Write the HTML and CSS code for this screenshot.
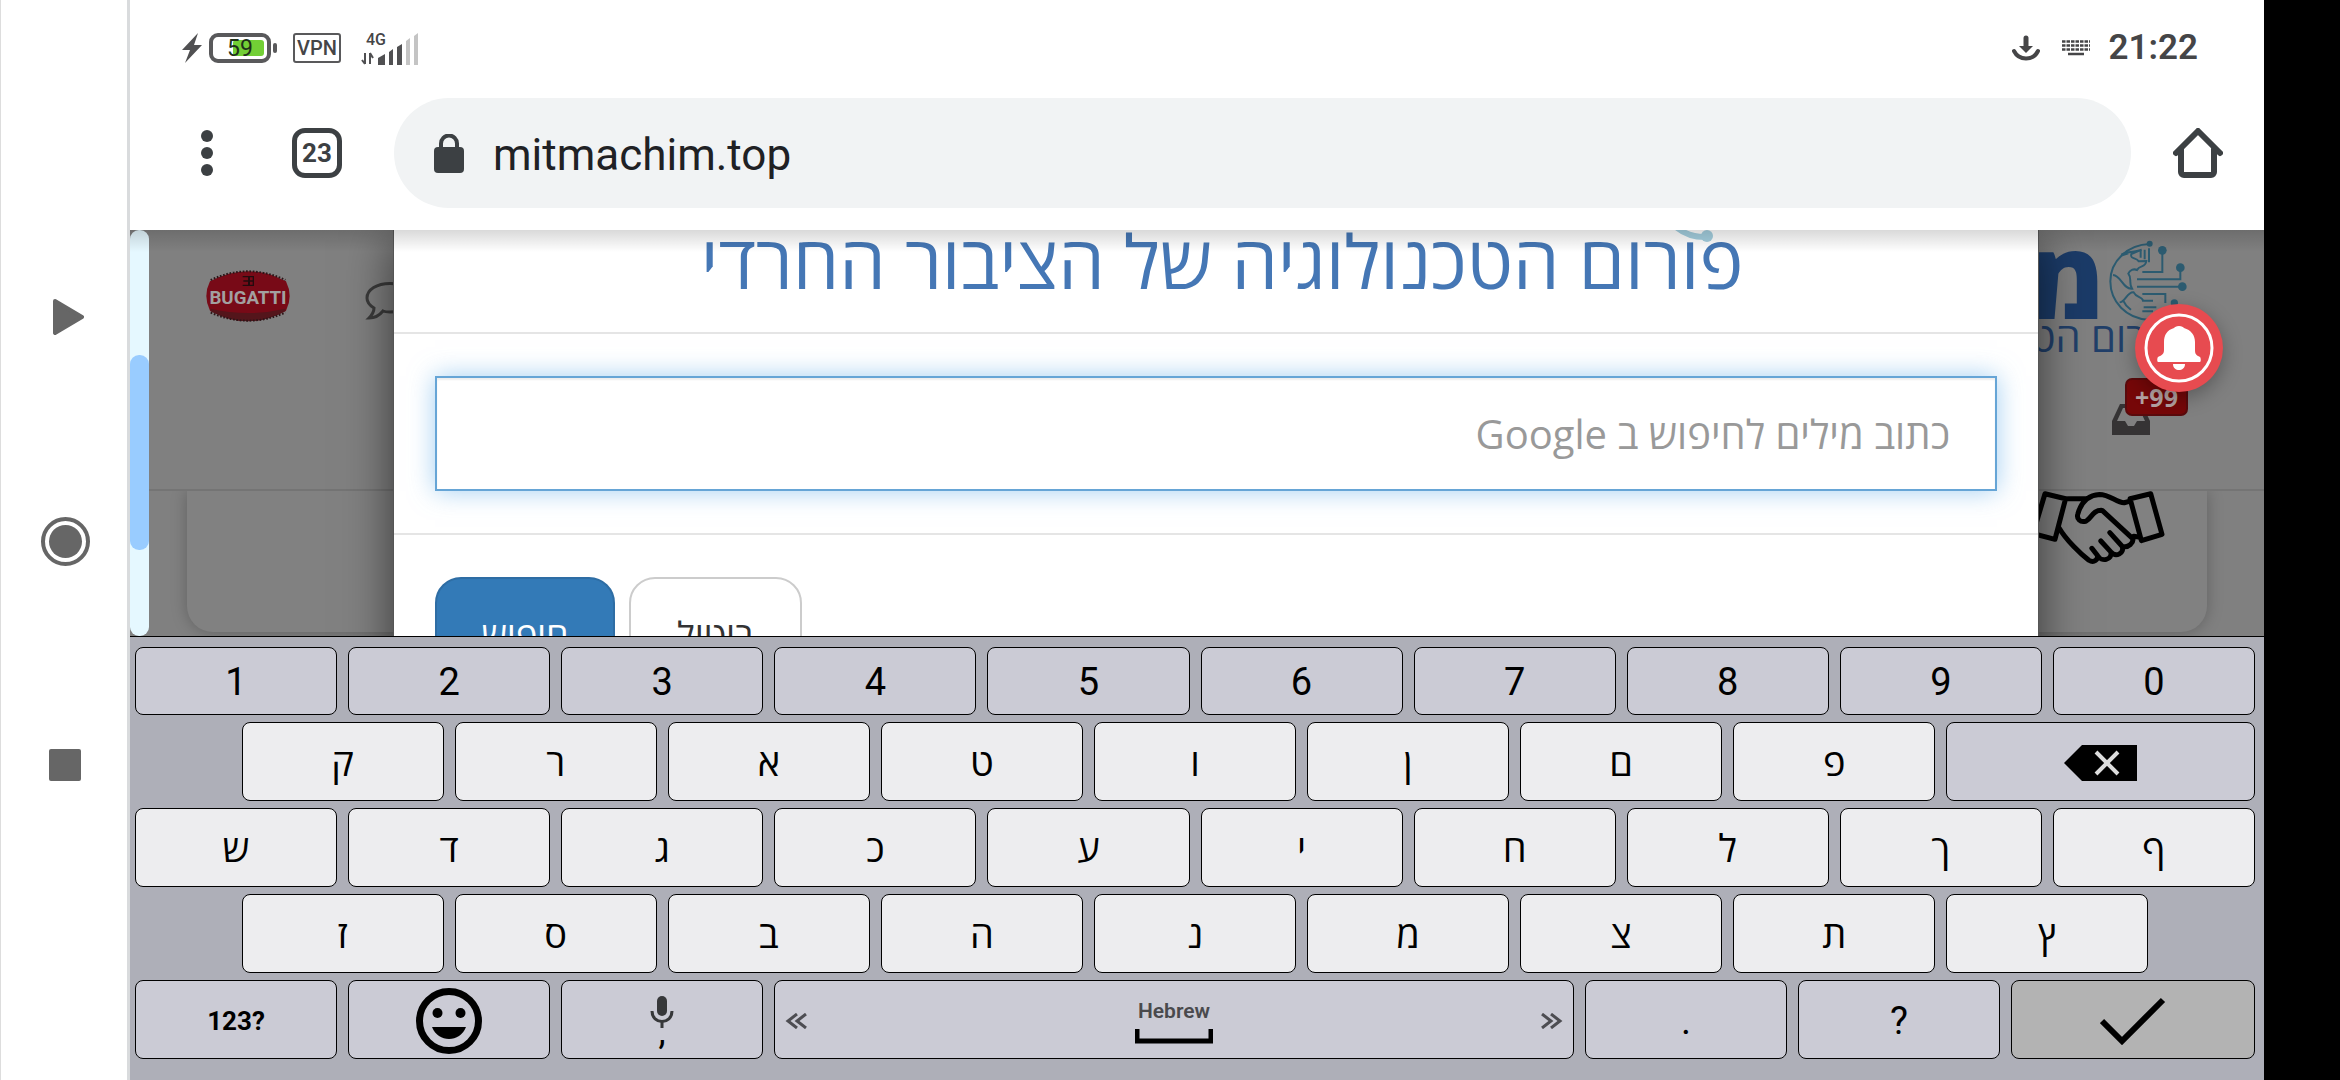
FILE: index.html
```html
<!DOCTYPE html>
<html lang="he">
<head>
<meta charset="utf-8">
<title>mitmachim.top</title>
<link rel="stylesheet" href="styles.css">
</head>
<body>
<div class="device">
  <nav class="rail" aria-label="System navigation">
    <button class="rail-button" aria-label="Back"><svg width="31" height="36" viewBox="0 0 31 36"><path d="M2 2 29 18 2 34Z" fill="#666" stroke="#666" stroke-width="4" stroke-linejoin="round"/></svg></button>
    <button class="rail-button" aria-label="Home"><svg width="49" height="49" viewBox="0 0 49 49"><circle cx="24.5" cy="24.5" r="22.5" fill="none" stroke="#666" stroke-width="4"/><circle cx="24.5" cy="24.5" r="16.5" fill="#666"/></svg></button>
    <button class="rail-button" aria-label="Recent apps"><svg width="32" height="32" viewBox="0 0 32 32"><rect width="32" height="32" rx="2" fill="#666"/></svg></button>
  </nav>

  <main class="screen">
    <header class="status">
      <div class="status-group">
        <svg class="bolt" width="20" height="30" viewBox="0 0 20 30"><path d="M16 0 0 17h8L3 30 20 12h-8Z" fill="#505052"/></svg>
        <svg class="battery" width="68" height="30" viewBox="0 0 68 30"><rect x="2" y="2" width="58" height="26" rx="7" fill="#fff" stroke="#59595b" stroke-width="4"/><rect x="24" y="7" width="31" height="16" rx="3" fill="#72cf35"/><rect x="64" y="10" width="4" height="10" rx="2" fill="#59595b"/><text x="31" y="23" text-anchor="middle" class="battery-text">59</text></svg>
        <span class="vpn">VPN</span>
        <svg class="signal" width="58" height="33" viewBox="0 0 58 33"><text x="5" y="13" class="net-text">4G</text><path d="M17 33V26L24 22V33ZM28 33V20L32 17V33ZM36 33V15L41 12V33Z" fill="#505052"/><path d="M45 33V9L49 6V33ZM53 33V4L57 1V33Z" fill="#c4c4c4"/><path d="M4 21V32M4 32 1 28M9 32V21M9 21 12 26" stroke="#505052" stroke-width="2" fill="none"/></svg>
      </div>
      <div class="status-group">
        <svg width="28" height="26" viewBox="0 0 28 26"><path d="M14 3V12" stroke="#454547" stroke-width="5" stroke-linecap="round"/><path d="M7 11H21L14 18Z" fill="#454547"/><path d="M2 16C7 26 21 26 26 16" stroke="#454547" stroke-width="4" fill="none" stroke-linecap="round"/></svg>
        <svg class="kbd" width="28" height="16" viewBox="0 0 28 16"><path d="M0 1.500H28M0 5.500H28M0 9.500H28" stroke="#454547" stroke-width="2.500" stroke-dasharray="3.500 1"/><path d="M6 14H22" stroke="#454547" stroke-width="2.500"/></svg>
        <time class="clock">21:22</time>
      </div>
    </header>

    <div class="toolbar">
      <button class="icon-button menu" aria-label="Menu"><svg width="14" height="46" viewBox="0 0 14 46"><g fill="#3c4043"><circle cx="7" cy="6" r="6"/><circle cx="7" cy="23" r="6"/><circle cx="7" cy="40" r="6"/></g></svg></button>
      <button class="tabs">23</button>
      <label class="address">
        <svg width="30" height="39" viewBox="0 0 30 39"><rect y="13" width="30" height="26" rx="4" fill="#3c4043"/><path d="M7 15V9.500a8 8 0 0 1 16 0V15" fill="none" stroke="#3c4043" stroke-width="4"/></svg>
        <input class="url" type="text" value="mitmachim.top" aria-label="Address">
      </label>
      <button class="icon-button home" aria-label="Home page"><svg width="50" height="50" viewBox="0 0 50 50"><path d="M3 25 25 3 47 25M8 21V44a3 3 0 0 0 3 3H38a3 3 0 0 0 3-3V21" fill="none" stroke="#3c4043" stroke-width="6" stroke-linecap="round" stroke-linejoin="round"/></svg></button>
    </div>

    <section class="page">
      <div class="scrollbar"><div class="thumb"></div></div>
      <div class="site">
        <div class="site-header">
          <div class="site-bar">
            <div class="site-user">
              <svg width="84" height="52" viewBox="0 0 252 156"><path d="M12 34Q126-26 240 34Q262 78 240 122Q126 184 12 122Q-10 78 12 34Z" fill="#780a17"/><path d="M14 116Q126 142 238 116L238 124Q126 184 14 124Z" fill="#54151b"/><path d="M14 30Q126-22 238 30M14 128Q126 176 238 128" fill="none" stroke="#2c1518" stroke-width="6" stroke-dasharray="5 5"/><path d="M110 20H128V46H110M112 33H144M130 20H142V46H130V20" fill="none" stroke="#240b0e" stroke-width="4"/><text x="126" y="101" text-anchor="middle" class="car-text">BUGATTI</text></svg>
              <svg class="chat" width="48" height="38" viewBox="0 0 48 38"><path d="M25 1.500c13 0 22 6 22 14.500s-9 14-22 14c-3 0-5 0-7-1-4 5-8 7-14 7 3-3 5-6 5-10-5-3-7-6-7-10C2 7.500 12 1.500 25 1.500Z" fill="none" stroke="#3b3b3b" stroke-width="3"/></svg>
            </div>
            <div class="brand" dir="rtl">
              <div class="brand-mark">
                <svg width="80" height="84" viewBox="505 58 240 252"><g fill="none" stroke="#2c5b70" stroke-width="6"><path d="M630 73C565 75 512 123 512 185S560 296 625 300"/><path d="M545 105C565 95 590 98 606 90L575 103C570 120 590 112 597 125L620 124C618 145 600 135 592 151C582 146 570 152 566 162C578 176 566 190 577 207C550 209 545 168 520 166M545 108 566 101M628 86V128M615 90V119M603 92V114M608 157H668V98M592 179H722V150M592 201H725M608 223H677V250M540 248C556 248 563 215 582 218C590 235 608 230 610 243H640M552 245C557 258 565 263 574 270M612 263H650M608 275H640"/></g><g fill="#2c5b70"><circle cx="630" cy="72" r="9"/><circle cx="668" cy="92" r="13"/><circle cx="722" cy="144" r="13"/><circle cx="728" cy="201" r="13"/><circle cx="704" cy="250" r="11"/></g></svg>
                <span class="brand-letter">מ</span>
              </div>
              <div class="brand-sub">פורום הטכ</div>
            </div>
          </div>
          <div class="inbox">
            <svg width="38" height="32" viewBox="0 0 38 32"><path d="M8 1H30L38 18V32H0V18Z" fill="#353334"/><path d="M11 5H27L33 18H25L22 23H16L13 18H5Z" fill="#808080"/></svg>
            <span class="badge">99+</span>
          </div>
        </div>
        <div class="card">
          <svg width="127" height="74" viewBox="295 812 382 222"><g fill="none" stroke="#000" stroke-width="15" stroke-linejoin="round" stroke-linecap="round"><path d="M316 820 378 835 346 957 280 940ZM572 835 634 820 668 942 606 961Z"/><path d="M385 835H440M358 922C380 960 425 1002 448 1020C464 1030 476 1017 474 1006L457 984M474 1006C485 1026 520 1020 514 995L484 962M514 995C530 1013 556 998 548 978L511 937M548 978C568 985 583 966 580 955L488 870C460 868 455 895 440 902C422 908 410 895 415 880C425 845 448 824 480 822C510 822 530 845 554 847L572 842M583 948 598 950"/></g></svg>
        </div>
      </div>

      <div class="overlay">
        <div class="modal" role="dialog" aria-label="Google" dir="rtl">
          <div class="modal-header">
            <svg class="swoosh" width="40" height="14" viewBox="0 0 40 14"><path d="M2-4Q14 7 32 7" fill="none" stroke="#a4cfdf" stroke-width="6"/><circle cx="34" cy="6" r="6" fill="#a4cfdf"/></svg>
            <h1 class="modal-title">פורום הטכנולוגיה של הציבור החרדי</h1>
          </div>
          <div class="modal-body">
            <input class="search" type="text" aria-label="חיפוש" placeholder="כתוב מילים לחיפוש ב Google">
          </div>
          <div class="modal-footer">
            <button class="btn">ביטול</button>
            <button class="btn btn-primary">חיפוש</button>
          </div>
        </div>
      </div>
      <div class="top-shade"></div>
      <button class="bell" aria-label="Notifications"><svg width="88" height="88" viewBox="0 0 88 88"><circle cx="44" cy="44" r="33" fill="none" stroke="#fff" stroke-width="3"/><path d="M44 22c3 0 4 1 5 2 7 2 11 7 11 14v8c0 4 1 5 5 7 1 1 1 5 0 5H23c-1 0-1-4 0-5 4-2 6-3 6-7v-8c0-7 3-12 10-14 1-1 2-2 5-2ZM38 60H50c0 8-12 8-12 0Z" fill="#fff"/></svg></button>
    </section>

    <section class="keyboard" aria-label="Keyboard">
      <div class="row numbers">
        <button class="key fn">1</button><button class="key fn">2</button><button class="key fn">3</button><button class="key fn">4</button><button class="key fn">5</button><button class="key fn">6</button><button class="key fn">7</button><button class="key fn">8</button><button class="key fn">9</button><button class="key fn">0</button>
      </div>
      <div class="row">
        <button class="key inset">ק</button><button class="key">ר</button><button class="key">א</button><button class="key">ט</button><button class="key">ו</button><button class="key">ן</button><button class="key">ם</button><button class="key">פ</button>
        <button class="key fn wide" aria-label="Delete"><svg width="74" height="38" viewBox="0 0 74 38"><path d="M0 19 18 1H73V37H18Z" fill="#000"/><path d="M32 8 54 30M54 8 32 30" stroke="#ddd" stroke-width="4"/></svg></button>
      </div>
      <div class="row">
        <button class="key">ש</button><button class="key">ד</button><button class="key">ג</button><button class="key">כ</button><button class="key">ע</button><button class="key">י</button><button class="key">ח</button><button class="key">ל</button><button class="key">ך</button><button class="key">ף</button>
      </div>
      <div class="row">
        <button class="key inset">ז</button><button class="key">ס</button><button class="key">ב</button><button class="key">ה</button><button class="key">נ</button><button class="key">מ</button><button class="key">צ</button><button class="key">ת</button><button class="key">ץ</button>
      </div>
      <div class="row bottom">
        <button class="key fn symbols">123?</button>
        <button class="key fn" aria-label="Emoji"><svg width="66" height="66" viewBox="0 0 66 66"><circle cx="33" cy="33" r="29.500" fill="none" stroke="#000" stroke-width="7"/><circle cx="21.500" cy="25" r="5" fill="#000"/><circle cx="44.500" cy="25" r="5" fill="#000"/><path d="M16 39H50C44 55 22 55 16 39Z" fill="#000"/></svg></button>
        <button class="key fn mic"><svg width="24" height="32" viewBox="0 0 24 32"><rect x="7" width="10" height="20" rx="5" fill="#37383a"/><path d="M2 15c0 14 20 14 20 0M12 25V32" fill="none" stroke="#37383a" stroke-width="3"/></svg><span class="comma">,</span></button>
        <button class="key fn space">
          <svg width="22" height="16" viewBox="0 0 22 16"><path d="M12 1 3 8 12 15M21 1 12 8 21 15" fill="none" stroke="#4d4d52" stroke-width="3"/></svg>
          <span class="space-label">Hebrew<svg width="78" height="15" viewBox="0 0 78 15"><path d="M2 0V12H76V0" fill="none" stroke="#000" stroke-width="5"/></svg></span>
          <svg width="22" height="16" viewBox="0 0 22 16"><path d="M1 1 10 8 1 15M10 1 19 8 10 15" fill="none" stroke="#4d4d52" stroke-width="3"/></svg>
        </button>
        <button class="key fn">.</button>
        <button class="key fn">?</button>
        <button class="key enter" aria-label="Enter"><svg width="66" height="48" viewBox="0 0 66 48"><path d="M2 24 22 44 63 3" fill="none" stroke="#000" stroke-width="6"/></svg></button>
      </div>
    </section>
  </main>
</div>
</body>
</html>
```
FILE: styles.css
```css
* { box-sizing: border-box; }

body {
  margin: 0;
  background: #000;
  font-family: Roboto, "Open Sans", sans-serif;
}

button {
  margin: 0;
  padding: 0;
  border: 0;
  background: none;
  font: inherit;
  color: inherit;
}

svg { display: block; flex: none; }

.device {
  display: flex;
  height: 100vh;
  padding-right: 76px;
}

/* system navigation rail */
.rail {
  flex: none;
  width: 130px;
  padding: 2px 0 0 2px;
  display: flex;
  flex-direction: column;
  align-items: center;
  justify-content: center;
  gap: 176px;
  background: #fff;
  border-left: 1px solid #ddd;
  border-right: 3px solid #d9dbdd;
}
.rail-button {
  width: 49px;
  height: 48px;
  display: flex;
  align-items: center;
  justify-content: center;
}
.rail-button:first-child { padding-left: 6px; }

.screen {
  flex: 1;
  min-width: 0;
  display: flex;
  flex-direction: column;
  background: #fff;
}

/* status bar */
.status {
  flex: none;
  height: 96px;
  padding: 0 66px 0 52px;
  display: flex;
  justify-content: space-between;
  align-items: center;
  color: #454547;
}
.status-group { display: flex; align-items: center; }
.battery { margin-left: 7px; }
.battery-text { font: 400 23px Roboto, sans-serif; fill: #20301a; }
.vpn {
  margin: 0 20px 0 16px;
  width: 48px;
  height: 30px;
  border: 2px solid #59595b;
  border-radius: 3px;
  font-size: 20px;
  font-weight: 500;
  line-height: 26px;
  text-align: center;
}
.net-text { font: 500 16px Roboto, sans-serif; fill: #454547; }
.kbd { margin: 0 18px 0 22px; }
.clock { font-size: 35px; font-weight: 600; line-height: 40px; }

/* browser toolbar */
.toolbar {
  flex: none;
  display: flex;
  align-items: center;
  padding: 2px 41px 22px 70px;
}
.tabs {
  margin: 0 52px 0 78px;
  width: 50px;
  height: 50px;
  border: 5px solid #3c4043;
  border-radius: 13px;
  font-size: 26px;
  font-weight: 700;
  line-height: 40px;
  color: #3c4043;
}
.address {
  flex: 1;
  height: 110px;
  padding: 0 40px;
  display: flex;
  align-items: center;
  gap: 29px;
  border-radius: 55px;
  background: #f1f3f4;
}
.url {
  flex: 1;
  min-width: 0;
  padding: 4px 0 0;
  border: 0;
  outline: 0;
  background: none;
  color: #202124;
  font: 400 44px/56px Roboto, sans-serif;
}
.home { margin-left: 42px; }

/* web page */
.page {
  position: relative;
  flex: 1;
  min-height: 0;
  display: flex;
  overflow: hidden;
  background: #808080;
}
.scrollbar {
  flex: none;
  width: 19px;
  padding-top: 125px;
  border-radius: 9px;
  background: #e5f8ff;
}
.thumb {
  height: 195px;
  border-radius: 9px;
  background: #99ccff;
}
.site { flex: 1; min-width: 0; }
.site-header {
  height: 261px;
  padding: 9px 76px 0 57px;
  border-bottom: 2px solid #747474;
}
.site-bar { display: flex; justify-content: space-between; height: 122px; }
.site-user { display: flex; gap: 75px; padding-top: 31px; align-items: flex-start; }
.chat { margin-top: 12px; }
.car-text {
  font: 700 56px Roboto, sans-serif;
  fill: #a3a0a0;
}
.brand { width: 240px; }
.brand-mark { display: flex; gap: 4px; height: 84px; }
.brand-letter {
  font: 800 106px/78px "Open Sans", sans-serif;
  color: #1b3b68;
}
.brand-sub {
  padding-right: 8px;
  font: 400 40px/28px "Open Sans", sans-serif;
  color: #213f69;
  white-space: nowrap;
}
.inbox {
  position: relative;
  width: 38px;
  margin: 42px 38px 0 auto;
}
.badge {
  position: absolute;
  left: 13px;
  top: -25px;
  width: 63px;
  height: 38px;
  border: 2px solid #5a0a0c;
  border-radius: 7px;
  background: #760708;
  color: #b5a3a3;
  font: 700 25px/34px "Open Sans", sans-serif;
  text-align: center;
  direction: rtl;
}
.card {
  height: 141px;
  margin: 0 57px 0 38px;
  padding-right: 42px;
  display: flex;
  justify-content: flex-end;
  border-radius: 0 0 26px 26px;
  background: #818181;
  box-shadow: 0 0 16px rgba(0, 0, 0, .25);
  clip-path: inset(0 -30px -30px -30px);
}

/* dialog */
.overlay {
  position: absolute;
  inset: 0;
  padding: 0 226px 0 264px;
}
.modal {
  min-height: 520px;
  background: #fff;
  box-shadow: 0 0 0 1px #555, 0 10px 46px rgba(0, 0, 0, .6);
}
.modal-header {
  position: relative;
  height: 104px;
  padding-left: 12px;
  border-bottom: 2px solid #e5e5e5;
}
.modal-title {
  margin: 0;
  font: 400 74px/62px "Open Sans", sans-serif;
  color: #4577b5;
  text-align: center;
  white-space: nowrap;
}
.swoosh { position: absolute; right: 325px; top: 0; }
.modal-body { padding: 42px 41px; border-bottom: 2px solid #e5e5e5; }
.search {
  display: block;
  width: 100%;
  height: 115px;
  padding: 0 45px;
  border: 2px solid #66a5d6;
  outline: 0;
  box-shadow: 0 0 24px rgba(102, 175, 233, .6), inset 0 2px 2px rgba(0, 0, 0, .07);
  font: 500 40px/56px "Open Sans", sans-serif;
}
.search::placeholder { color: #999; opacity: 1; }
.modal-footer {
  display: flex;
  justify-content: flex-end;
  gap: 14px;
  padding: 42px 41px;
}
.btn {
  width: 173px;
  height: 116px;
  border: 2px solid #ccc;
  border-radius: 26px;
  color: #333;
  font: 500 36px/56px "Open Sans", sans-serif;
}
.btn-primary { width: 180px; border-color: #2e6da4; background: #337ab7; color: #fff; }
.top-shade {
  position: absolute;
  inset: 0 0 auto;
  height: 22px;
  background: linear-gradient(rgba(0, 0, 0, .15), rgba(0, 0, 0, 0));
}
.bell {
  position: absolute;
  top: 74px;
  right: 41px;
  border-radius: 50%;
  background: #e74b50;
  box-shadow: 0 6px 20px rgba(0, 0, 0, .3);
}

/* keyboard */
.keyboard {
  flex: none;
  display: flex;
  flex-direction: column;
  gap: 7px;
  padding: 10px 9px 21px 5px;
  border-top: 1px solid #000;
  background: #aeafb8;
}
.row {
  display: grid;
  grid-template-columns: repeat(20, 1fr);
  grid-auto-rows: 79px;
  column-gap: 11px;
}
.numbers { grid-auto-rows: 68px; }
.key {
  grid-column: span 2;
  display: flex;
  align-items: center;
  justify-content: center;
  padding-top: 2px;
  border: 1px solid #000;
  border-radius: 8px;
  background: #ededef;
  color: #000;
  font: 400 38px/48px Roboto, "Open Sans", sans-serif;
}
.inset { grid-column: 2 / span 2; }
.wide { grid-column: span 3; }
.fn { background: #cbcbd5; }
.bottom { grid-template-columns: 202fr 202fr 202fr 800fr 202fr 202fr 244fr; }
.bottom .key { grid-column: auto; }
.bottom .symbols { font-size: 26px; font-weight: 700; }
.mic { flex-direction: column; }
.comma { font-size: 36px; line-height: 8px; height: 18px; }
.bottom .space { justify-content: space-between; padding: 2px 10px 0; }
.space-label {
  display: flex;
  flex-direction: column;
  align-items: center;
  gap: 4px;
  font-size: 21px;
  font-weight: 600;
  line-height: 28px;
  color: #4a4a4d;
}
.enter { background: #b3b3b3; }
```
